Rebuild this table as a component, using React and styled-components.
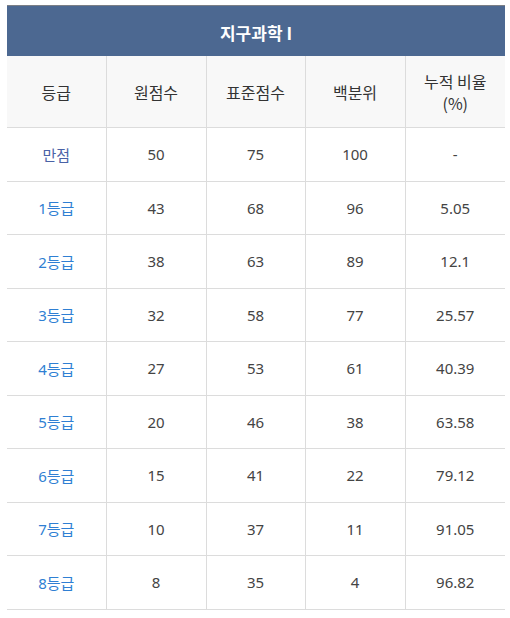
import React from "react";
import styled, { createGlobalStyle } from "styled-components";

const Global = createGlobalStyle`
  html, body { margin: 0; padding: 0; background: #fff; }
  body { font-family: "Noto Sans", "Noto Sans CJK KR", sans-serif; }
`;

const Wrap = styled.div`
  padding: 5px 5px 0 7px;
`;

const Table = styled.table`
  width: 498px;
  border-collapse: collapse;
  table-layout: fixed;
  font-size: 15px;
  color: #444;
`;

const TitleCell = styled.th`
  height: 48px;
  padding: 2px 0 0;
  background: #4c6891;
  border-top: 1px solid #7b7f86;
  color: #fff;
  font-weight: 700;
  font-size: 17px;
  font-family: "Noto Sans CJK KR", sans-serif;
  text-align: center;
  vertical-align: middle;
`;

const HeadCell = styled.th`
  height: 71px;
  padding: 0 10px;
  background: #f8f8f8;
  border-left: 1px solid #dcdcdc;
  border-bottom: 1px solid #dcdcdc;
  font-weight: 400;
  font-size: 16px;
  color: #333;
  line-height: 22px;
  font-family: "Noto Sans CJK KR", sans-serif;
  text-align: center;
  &:first-child { border-left: none; }
`;

const Row = styled.tr`
  height: 53.5px;
`;

const Cell = styled.td`
  padding: 0;
  border-left: 1px solid #dcdcdc;
  border-bottom: 1px solid #dcdcdc;
  text-align: center;
  vertical-align: middle;
  color: ${(p) => p.$color || "#444"};
  &:first-child { border-left: none; }
`;

const cols = [99, 100, 99, 100, 100];

const data = [
  ["만점", "50", "75", "100", "-"],
  ["1등급", "43", "68", "96", "5.05"],
  ["2등급", "38", "63", "89", "12.1"],
  ["3등급", "32", "58", "77", "25.57"],
  ["4등급", "27", "53", "61", "40.39"],
  ["5등급", "20", "46", "38", "63.58"],
  ["6등급", "15", "41", "22", "79.12"],
  ["7등급", "10", "37", "11", "91.05"],
  ["8등급", "8", "35", "4", "96.82"],
];

export default function App() {
  return (
    <Wrap>
      <Global />
      <Table>
        <colgroup>
          {cols.map((w, i) => (
            <col key={i} style={{ width: w }} />
          ))}
        </colgroup>
        <thead>
          <tr>
            <TitleCell colSpan={5}>지구과학 I</TitleCell>
          </tr>
          <tr>
            <HeadCell>등급</HeadCell>
            <HeadCell>원점수</HeadCell>
            <HeadCell>표준점수</HeadCell>
            <HeadCell>백분위</HeadCell>
            <HeadCell>누적 비율<br />(%)</HeadCell>
          </tr>
        </thead>
        <tbody>
          {data.map((r, i) => (
            <Row key={i}>
              {r.map((c, j) => (
                <Cell
                  key={j}
                  $color={j === 0 ? (i === 0 ? "#4a62a6" : "#2f7fd3") : undefined}
                >
                  {c}
                </Cell>
              ))}
            </Row>
          ))}
        </tbody>
      </Table>
    </Wrap>
  );
}
